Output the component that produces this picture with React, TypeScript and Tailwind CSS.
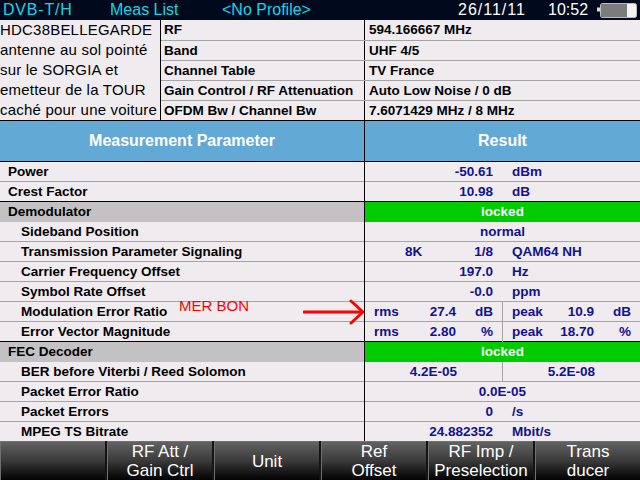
import React from "react";

type RowProps = {
  label: string;
  sub?: boolean;
  dark?: boolean;
  group?: boolean;
  children?: React.ReactNode;
};

function Row({ label, sub, dark, group, children }: RowProps) {
  return (
    <div
      className={`grid grid-cols-[365px_275px] h-[20px] border-t ${
        dark ? "border-black" : "border-[#a4a4a4]"
      }`}
    >
      <div
        className={`flex items-center border-r border-black whitespace-nowrap text-black ${
          sub ? "pl-[21px]" : "pl-[8px]"
        } ${group ? "bg-[#c3c1c3]" : ""}`}
      >
        {label}
      </div>
      <div
        className={`flex items-center h-full whitespace-nowrap ${
          group ? "bg-[#00cc00] text-white justify-center" : "text-[#12128f]"
        }`}
      >
        {children}
      </div>
    </div>
  );
}

function ValueUnit({ v, u }: { v: string; u: string }) {
  return (
    <>
      <span className="w-[128px] text-right">{v}</span>
      <span className="ml-[19px]">{u}</span>
    </>
  );
}

function Half({ label, v, u, left }: { label: string; v: string; u: string; left?: boolean }) {
  return (
    <div
      className={`flex items-center h-full ${
        left ? "w-[138px] border-r border-[#a4a4a4]" : "flex-1"
      }`}
    >
      <span className="w-[50px] pl-[9px]">{label}</span>
      <span className="w-[41px] text-right">{v}</span>
      <span className="w-[37px] text-right">{u}</span>
    </div>
  );
}

const infoRows = [
  ["RF", "594.166667 MHz"],
  ["Band", "UHF 4/5"],
  ["Channel Table", "TV France"],
  ["Gain Control / RF Attenuation", "Auto Low Noise / 0 dB"],
  ["OFDM Bw / Channel Bw", "7.6071429 MHz / 8 MHz"],
];

const softkeys = [
  [""],
  ["RF Att /", "Gain Ctrl"],
  ["Unit"],
  ["Ref", "Offset"],
  ["RF Imp /", "Preselection"],
  ["Trans", "ducer"],
];

export default function App() {
  return (
    <div className="relative w-[640px] h-[480px] overflow-hidden bg-[#efebef] font-['Liberation_Sans',Arial,sans-serif]">
      {/* status bar */}
      <div className="flex items-center h-[20px] bg-[#000a1c] text-[16px] leading-[20px] text-[#12d8e8] whitespace-nowrap">
        <div className="w-[110px] pl-[3px] tracking-[0.8px]">DVB-T/H</div>
        <div className="w-[112px]">Meas List</div>
        <div className="w-[236px]">&lt;No Profile&gt;</div>
        <div className="w-[90px] text-white tracking-[1px]">26/11/11</div>
        <div className="w-[49px] text-white">10:52</div>
        <svg width="42" height="18" viewBox="0 0 42 18">
          <rect x="0" y="6.5" width="3" height="4" fill="#d8d8d8" />
          <rect x="3.5" y="2.5" width="36" height="14" rx="2" fill="#f2f2f2" stroke="#bdbdbd" />
          <rect x="4" y="3" width="26" height="13" fill="#7c7c7c" />
        </svg>
      </div>

      {/* info block */}
      <div className="flex h-[100px]">
        <div className="w-[161px] border-r border-black text-[15px] leading-[20px] text-black whitespace-nowrap tracking-[0.2px] overflow-hidden">
          <div>HDC38BELLEGARDE</div>
          <div>antenne au sol pointé</div>
          <div>sur le SORGIA et</div>
          <div>emetteur de la TOUR</div>
          <div>caché pour une voiture</div>
        </div>
        <div className="flex-1 flex flex-col text-[13.5px] font-bold text-black">
          {infoRows.map(([l, v], i) => (
            <div
              key={l}
              className={`grid grid-cols-[204px_275px] h-[20px] ${
                i > 0 ? "border-t border-[#a4a4a4]" : ""
              }`}
            >
              <div className="flex items-center pl-[3px] border-r border-black whitespace-nowrap">{l}</div>
              <div className="flex items-center pl-[4px] whitespace-nowrap">{v}</div>
            </div>
          ))}
        </div>
      </div>

      {/* table header */}
      <div className="grid grid-cols-[365px_275px] h-[41px] border-t border-black bg-[#63a9d5] text-[16px] font-bold text-white">
        <div className="flex items-center justify-center border-r border-black">Measurement Parameter</div>
        <div className="flex items-center justify-center">Result</div>
      </div>

      {/* measurements */}
      <div className="text-[13.5px] font-bold">
        <Row label="Power" dark>
          <ValueUnit v="-50.61" u="dBm" />
        </Row>
        <Row label="Crest Factor">
          <ValueUnit v="10.98" u="dB" />
        </Row>
        <Row label="Demodulator" dark group>
          locked
        </Row>
        <Row label="Sideband Position" sub dark>
          <span className="w-full text-center">normal</span>
        </Row>
        <Row label="Transmission Parameter Signaling" sub>
          <div className="flex w-[128px] justify-between pl-[40px]">
            <span>8K</span>
            <span>1/8</span>
          </div>
          <span className="ml-[19px]">QAM64 NH</span>
        </Row>
        <Row label="Carrier Frequency Offset" sub>
          <ValueUnit v="197.0" u="Hz" />
        </Row>
        <Row label="Symbol Rate Offset" sub>
          <ValueUnit v="-0.0" u="ppm" />
        </Row>
        <Row label="Modulation Error Ratio" sub>
          <Half label="rms" v="27.4" u="dB" left />
          <Half label="peak" v="10.9" u="dB" />
        </Row>
        <Row label="Error Vector Magnitude" sub>
          <Half label="rms" v="2.80" u="%" left />
          <Half label="peak" v="18.70" u="%" />
        </Row>
        <Row label="FEC Decoder" dark group>
          locked
        </Row>
        <Row label="BER before Viterbi / Reed Solomon" sub dark>
          <div className="flex items-center justify-center h-full w-[138px] border-r border-[#a4a4a4]">4.2E-05</div>
          <div className="flex items-center justify-center h-full flex-1">5.2E-08</div>
        </Row>
        <Row label="Packet Error Ratio" sub>
          <span className="w-full text-center">0.0E-05</span>
        </Row>
        <Row label="Packet Errors" sub>
          <ValueUnit v="0" u="/s" />
        </Row>
        <Row label="MPEG TS Bitrate" sub>
          <ValueUnit v="24.882352" u="Mbit/s" />
        </Row>
      </div>

      {/* softkeys */}
      <div className="grid grid-cols-6 gap-[2px] h-[39px] bg-[#141414]">
        {softkeys.map((lines, i) => (
          <div
            key={i}
            className="flex flex-col items-center justify-center border-t border-l border-[#707070] bg-linear-to-b from-[#626262] via-[#3a3a3a] to-[#040404] text-[17px] leading-[19px] text-white"
          >
            {lines.map((t) => (
              <span key={t}>{t}</span>
            ))}
          </div>
        ))}
      </div>

      {/* annotation */}
      <div className="absolute left-[179px] top-[297px] text-[15px] leading-[18px] text-[#ff0000]">MER BON</div>
      <svg className="absolute left-[303px] top-[299px]" width="64" height="26" viewBox="0 0 64 26">
        <path d="M1 13 H58" stroke="#ff0000" strokeWidth="3" strokeLinecap="round" />
        <path d="M48 2 L60 13 L48 24" stroke="#ff0000" strokeWidth="3" fill="none" strokeLinecap="round" strokeLinejoin="round" />
      </svg>
    </div>
  );
}
